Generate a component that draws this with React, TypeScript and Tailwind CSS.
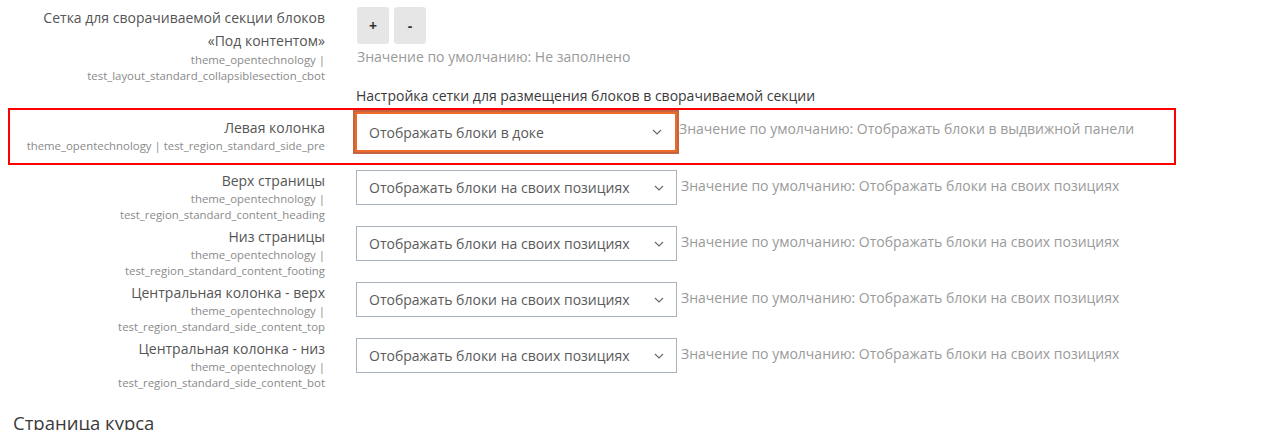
import { useState } from 'react'

interface RegionRow {
  label: string
  sub: string[]
  value: string
  defaultValue: string
}

const rows: RegionRow[] = [
  {
    label: 'Верх страницы',
    sub: ['theme_opentechnology |', 'test_region_standard_content_heading'],
    value: 'Отображать блоки на своих позициях',
    defaultValue: 'Отображать блоки на своих позициях',
  },
  {
    label: 'Низ страницы',
    sub: ['theme_opentechnology |', 'test_region_standard_content_footing'],
    value: 'Отображать блоки на своих позициях',
    defaultValue: 'Отображать блоки на своих позициях',
  },
  {
    label: 'Центральная колонка - верх',
    sub: ['theme_opentechnology |', 'test_region_standard_side_content_top'],
    value: 'Отображать блоки на своих позициях',
    defaultValue: 'Отображать блоки на своих позициях',
  },
  {
    label: 'Центральная колонка - низ',
    sub: ['theme_opentechnology |', 'test_region_standard_side_content_bot'],
    value: 'Отображать блоки на своих позициях',
    defaultValue: 'Отображать блоки на своих позициях',
  },
]

function Chevron() {
  return (
    <svg width="10" height="6" viewBox="0 0 10 6" className="shrink-0">
      <path d="M1 1l4 4 4-4" fill="none" stroke="#666" strokeWidth="1.1" />
    </svg>
  )
}

function Select({ value, focused }: { value: string; focused?: boolean }) {
  return (
    <div
      className={
        focused
          ? 'flex h-[40px] w-[322px] items-center justify-between border-2 border-[#ec6a2b] pl-[12px] pr-[13px] ring-2 ring-[#c4653f] bg-white'
          : 'flex h-[35px] w-[321px] items-center justify-between border border-[#aab2bd] pl-[12px] pr-[12px] bg-white'
      }
    >
      <span className="text-[14px] text-[#5a5a5a]">{value}</span>
      <Chevron />
    </div>
  )
}

export default function App() {
  const [count] = useState(0)

  return (
    <div
      className="w-[1284px] h-[430px] overflow-hidden bg-white text-[#555]"
      style={{ fontFamily: '"Open Sans", "Noto Sans", sans-serif' }}
    >
      {/* collapsible section grid */}
      <div className="flex h-[85px] pt-[6px]">
        <div className="w-[325px] text-right">
          <div className="text-[14px] leading-[23px] text-[#555]">
            Сетка для сворачиваемой секции блоков
            <br />
            «Под контентом»
          </div>
          <div className="text-[11.4px] leading-[16px] text-[#8a8a8a]">theme_opentechnology |</div>
          <div className="text-[11.4px] leading-[16px] text-[#8a8a8a]">test_layout_standard_collapsiblesection_cbot</div>
        </div>
        <div className="ml-[32px] flex flex-col">
          <div className="flex gap-[5px] pt-[1px]">
            <button className="flex h-[37px] w-[32px] items-center justify-center rounded-[3px] bg-[#e6e6e6] text-[14px] font-bold text-[#333]">
              +
            </button>
            <button className="flex h-[37px] w-[32px] items-center justify-center rounded-[3px] bg-[#e6e6e6] text-[14px] font-bold text-[#333]">
              -
            </button>
          </div>
          <div className="mt-[3px] text-[14px] leading-[20px] text-[#9a9a9a]">
            Значение по умолчанию: Не заполнено{count ? '' : ''}
          </div>
        </div>
      </div>

      <div className="ml-[356px] h-[22px] text-[14px] leading-[22px] text-[#3a3a3a]">
        Настройка сетки для размещения блоков в сворачиваемой секции
      </div>

      {/* highlighted row */}
      <div className="mt-[1px] ml-[8px] flex h-[57px] w-[1168px] border-2 border-[#ff0000]">
        <div className="w-[315px] pt-[7px] text-right">
          <div className="text-[14px] leading-[21px]">Левая колонка</div>
          <div className="text-[11.4px] leading-[16px] text-[#8a8a8a]">
            theme_opentechnology | test_region_standard_side_pre
          </div>
        </div>
        <div className="ml-[30px] mt-[2px] flex items-start">
          <Select value="Отображать блоки в доке" focused />
          <span className="ml-[2px] pt-[7px] text-[14px] leading-[20px] text-[#9a9a9a]">
            Значение по умолчанию: Отображать блоки в выдвижной панели
          </span>
        </div>
      </div>

      <div className="mt-[5px] flex flex-col">
        {rows.map((r) => (
          <div key={r.label} className="flex h-[56px]">
            <div className="w-[325px] text-right">
              <div className="text-[14px] leading-[21px]">{r.label}</div>
              {r.sub.map((s) => (
                <div key={s} className="text-[11.4px] leading-[16px] text-[#8a8a8a]">
                  {s}
                </div>
              ))}
            </div>
            <div className="ml-[31px] flex items-start">
              <Select value={r.value} />
              <span className="ml-[4px] pt-[6px] text-[14px] leading-[20px] text-[#9a9a9a]">
                Значение по умолчанию: {r.defaultValue}
              </span>
            </div>
          </div>
        ))}
      </div>

      <div className="mt-[17px] ml-[13px] text-[18.5px] leading-[24px] text-[#3a3a3a]">Страница курса</div>
    </div>
  )
}
